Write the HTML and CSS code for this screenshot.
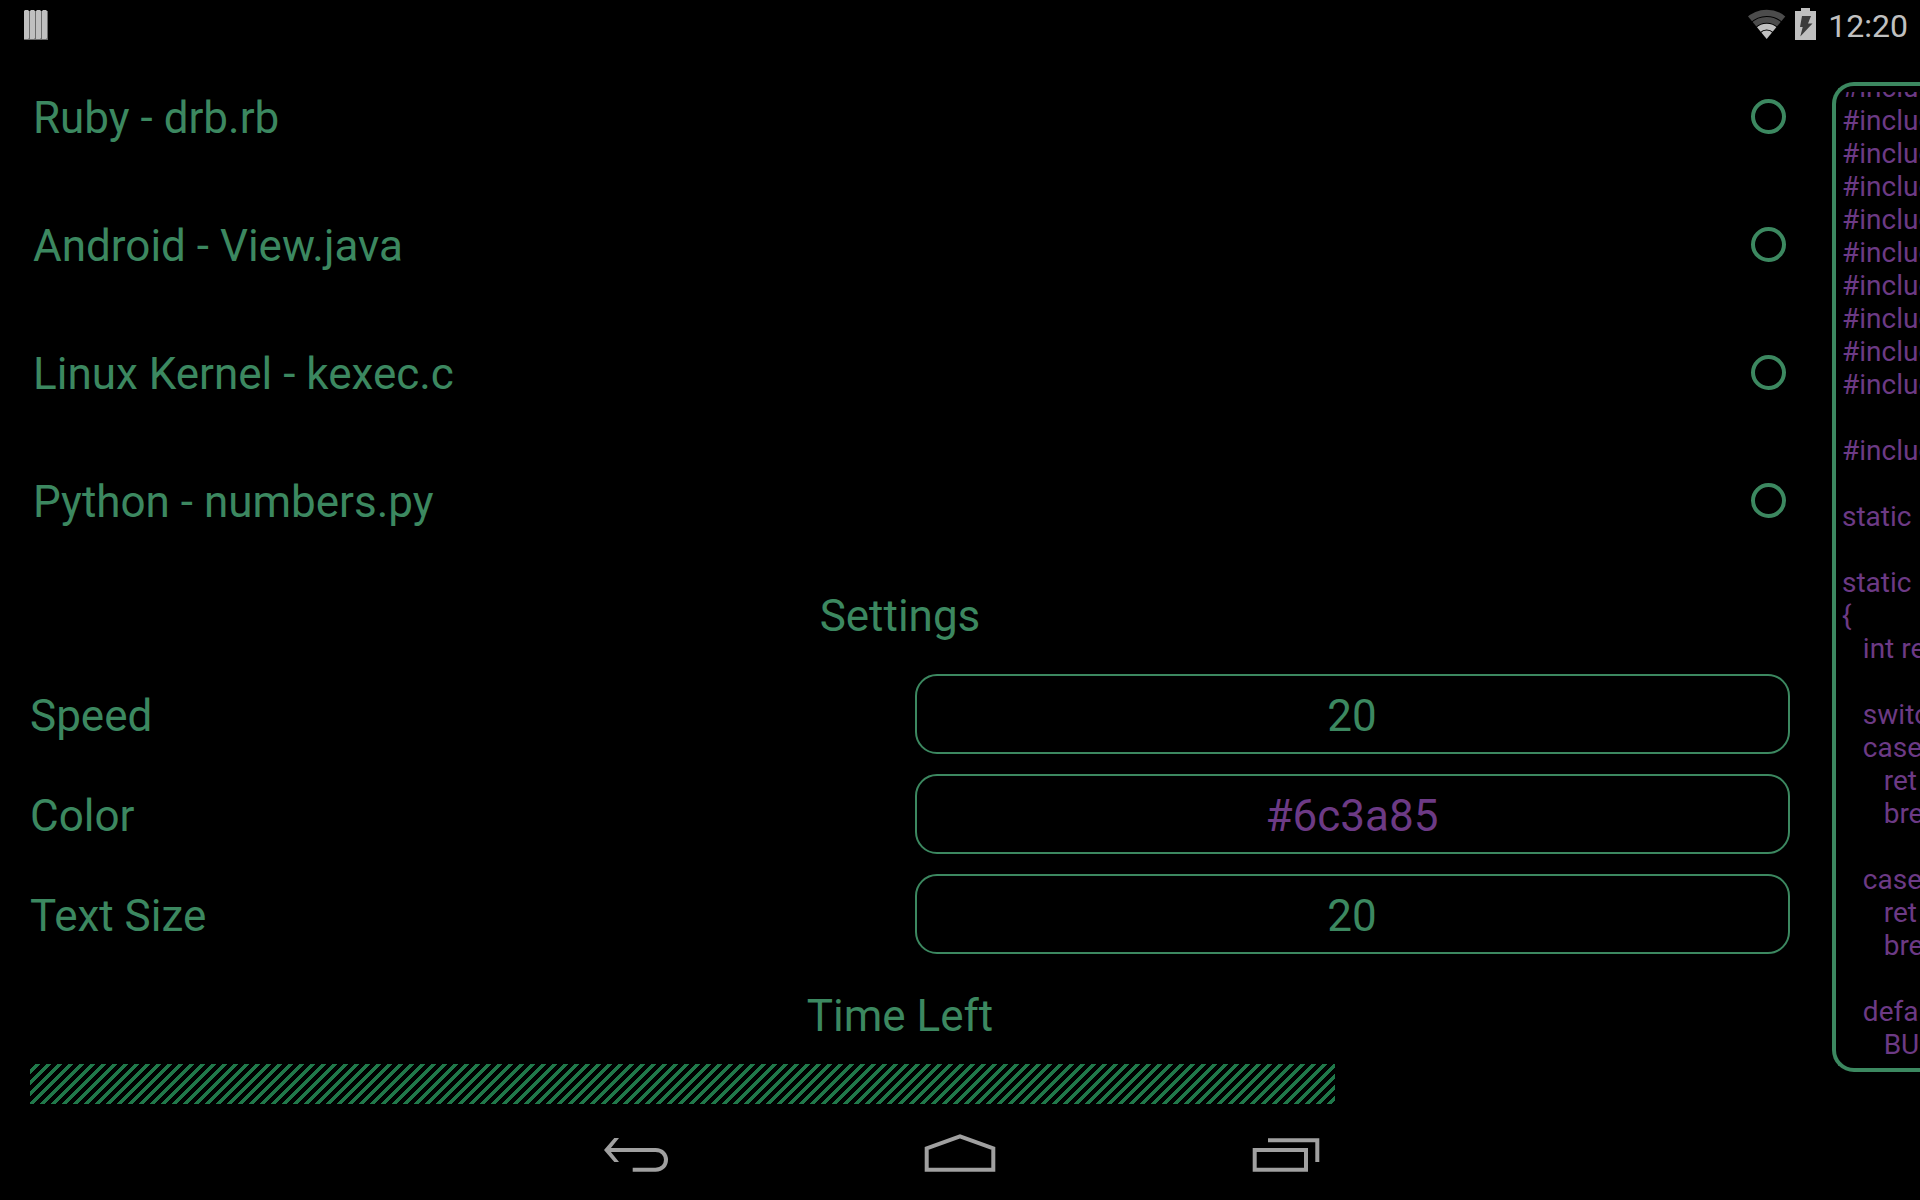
FILE: index.html
```html
<!DOCTYPE html>
<html lang="en">
<head>
<meta charset="utf-8">
<title>Settings</title>
<link rel="stylesheet" href="styles.css">
</head>
<body>
<header class="status">
  <svg class="status-app" width="24" height="30" viewBox="0 0 24 30" aria-hidden="true">
    <path fill="#6c6c6c" d="M0 1h24v29H0z"/>
    <path fill="#c0c0c0" d="M0 1l1-1h3l1 1v27l-1 1H0zM6 1l1-1h3l1 1v27l-1 1H6zM12 1l1-1h3l1 1v27l-1 1h-4zM18 1l1-1h3l1 1v27l-1 1h-4z"/>
  </svg>
  <svg width="44" height="50" viewBox="0 0 44 50" aria-hidden="true">
    <clipPath id="fan"><path d="M21.700 39L-3 9V0h49.400v9z"/></clipPath>
    <g clip-path="url(#fan)" fill="none">
      <circle cx="21.700" cy="39" r="26.200" stroke="#4c4c4c" stroke-width="6.200"/>
      <circle cx="21.700" cy="39" r="19.200" stroke="#4c4c4c" stroke-width="5.800"/>
      <circle cx="21.700" cy="39" r="12.400" stroke="#c0c0c0" stroke-width="5.800"/>
      <circle cx="21.700" cy="39" r="8.400" fill="#c0c0c0"/>
    </g>
  </svg>
  <svg width="22" height="50" viewBox="0 0 22 50" aria-hidden="true">
    <path fill="#c0c0c0" d="M6 8h9v3h6v29H0V11h6z"/>
    <path fill="#3c3c3c" d="M7 16h9l-3 7.500h4.500L5.300 36.500l2.400-9.500H5z"/>
  </svg>
  <time class="clock">12:20</time>
</header>

<div class="screen">
  <main class="panel">
    <form>
      <div class="sources">
        <div class="source"><label for="ruby">Ruby - drb.rb</label><input type="radio" name="source" id="ruby"></div>
        <div class="source"><label for="android">Android - View.java</label><input type="radio" name="source" id="android"></div>
        <div class="source"><label for="linux">Linux Kernel - kexec.c</label><input type="radio" name="source" id="linux"></div>
        <div class="source"><label for="python">Python - numbers.py</label><input type="radio" name="source" id="python"></div>
      </div>
      <h2 class="heading">Settings</h2>
      <div class="setting"><label for="speed">Speed</label><input class="field" type="text" id="speed" value="20"></div>
      <div class="setting"><label for="color">Color</label><input class="field field-color" type="text" id="color" value="#6c3a85"></div>
      <div class="setting"><label for="size">Text Size</label><input class="field" type="text" id="size" value="20"></div>
      <h2 class="heading" id="time-left">Time Left</h2>
      <progress class="time" max="1760" value="1305" aria-labelledby="time-left"></progress>
    </form>
  </main>
  <aside class="preview">
<pre class="code">#include
#include
#include
#include
#include
#include
#include
#include
#include
#include

#include

static

static
{
   int ret

   switch
   case
      ret
      break

   case
      ret
      break

   default
      BUG</pre>
  </aside>
</div>

<nav class="nav">
  <button type="button" aria-label="Back">
    <svg width="80" height="48" viewBox="0 0 80 48">
      <path fill="#a0a0a0" d="M8 22L18.300 10H23L13.300 22 23 34h-4.700z"/>
      <path fill="none" stroke="#a0a0a0" stroke-width="4" d="M11 22h48.500c14 0 14 19.700 0 19.700H36.700"/>
    </svg>
  </button>
  <button type="button" aria-label="Home">
    <svg width="80" height="48" viewBox="0 0 80 48">
      <path fill="none" stroke="#a0a0a0" stroke-width="4" d="M6.700 41.700V20.300L40 8.400l33.300 11.900v21.400z"/>
    </svg>
  </button>
  <button type="button" aria-label="Recent apps">
    <svg width="80" height="48" viewBox="0 0 80 48">
      <path fill="none" stroke="#a0a0a0" stroke-width="4" d="M10.700 22H62v19.700H10.700zM24 12.200h49.300V34"/>
    </svg>
  </button>
</nav>
</body>
</html>
```
FILE: styles.css
```css
:root {
  --green: #3c8860;
  --stripe: #20784a;
  --purple: #6c3a85;
}

* {
  box-sizing: border-box;
}

body {
  margin: 0;
  min-height: 100vh;
  display: flex;
  flex-direction: column;
  background: #000;
  color: var(--green);
  font-family: Roboto, "Liberation Sans", sans-serif;
  font-size: 44px;
  line-height: 52px;
}

.status {
  display: flex;
  align-items: center;
  gap: 6px;
  height: 50px;
  padding: 0 12px 0 24px;
}

.status-app {
  margin-right: auto;
}

.clock {
  margin-left: 5px;
  padding-top: 1px;
  color: #c0c0c0;
  font-size: 32px;
}

.screen {
  flex: 1;
  display: grid;
  grid-template-columns: minmax(0, 1fr) 88px;
  gap: 42px;
  padding-left: 30px;
}

.panel {
  padding-top: 2px;
}

.source {
  display: flex;
  align-items: center;
  justify-content: space-between;
  height: 128px;
  padding: 0 4px 0 3px;
}

.source label {
  padding-top: 4px;
}

.source input {
  appearance: none;
  width: 35px;
  height: 35px;
  margin: 0;
  border: 4px solid var(--green);
  border-radius: 50%;
}

.source input:checked {
  background: var(--green);
  background-clip: content-box;
  padding: 4px;
}

.heading {
  display: flex;
  align-items: center;
  justify-content: center;
  height: 100px;
  margin: 0;
  padding: 4px 20px 0 0;
  font-size: 44px;
  font-weight: 400;
}

.setting {
  display: grid;
  grid-template-columns: minmax(0, 1fr) minmax(0, 1fr);
  align-items: center;
  gap: 10px;
  height: 100px;
}

.setting label {
  padding-top: 4px;
}

.field {
  width: 100%;
  height: 80px;
  padding: 4px 1px 0 0;
  border: 2px solid var(--green);
  border-radius: 22px;
  background: none;
  color: inherit;
  font: inherit;
  text-align: center;
}

.field-color {
  color: var(--purple);
}

.time {
  appearance: none;
  display: block;
  width: 100%;
  height: 40px;
  border: 0;
  background: none;
}

.time::-webkit-progress-bar {
  background: none;
}

.time::-webkit-progress-value {
  background: linear-gradient(135deg, transparent 25%, var(--stripe) 25% 50%, transparent 50% 75%, var(--stripe) 75%) 0 0 / 11px 11px;
}

.preview {
  display: flex;
  flex-direction: column;
  margin: 32px 0;
  padding: 6px 0 7px 6px;
  border: 4px solid var(--green);
  border-right: 0;
  border-radius: 22px 0 0 22px;
  overflow: hidden;
}

.code {
  flex: 1 1 0;
  min-height: 0;
  display: flex;
  flex-direction: column;
  justify-content: flex-end;
  margin: 0;
  overflow: hidden;
  color: var(--purple);
  font-family: inherit;
  font-size: 28px;
  line-height: 33px;
}

.nav {
  display: grid;
  grid-template-columns: repeat(3, 324px);
  justify-content: center;
  height: 96px;
}

.nav button {
  display: grid;
  place-items: center;
  padding: 0;
  border: 0;
  background: none;
}
```
